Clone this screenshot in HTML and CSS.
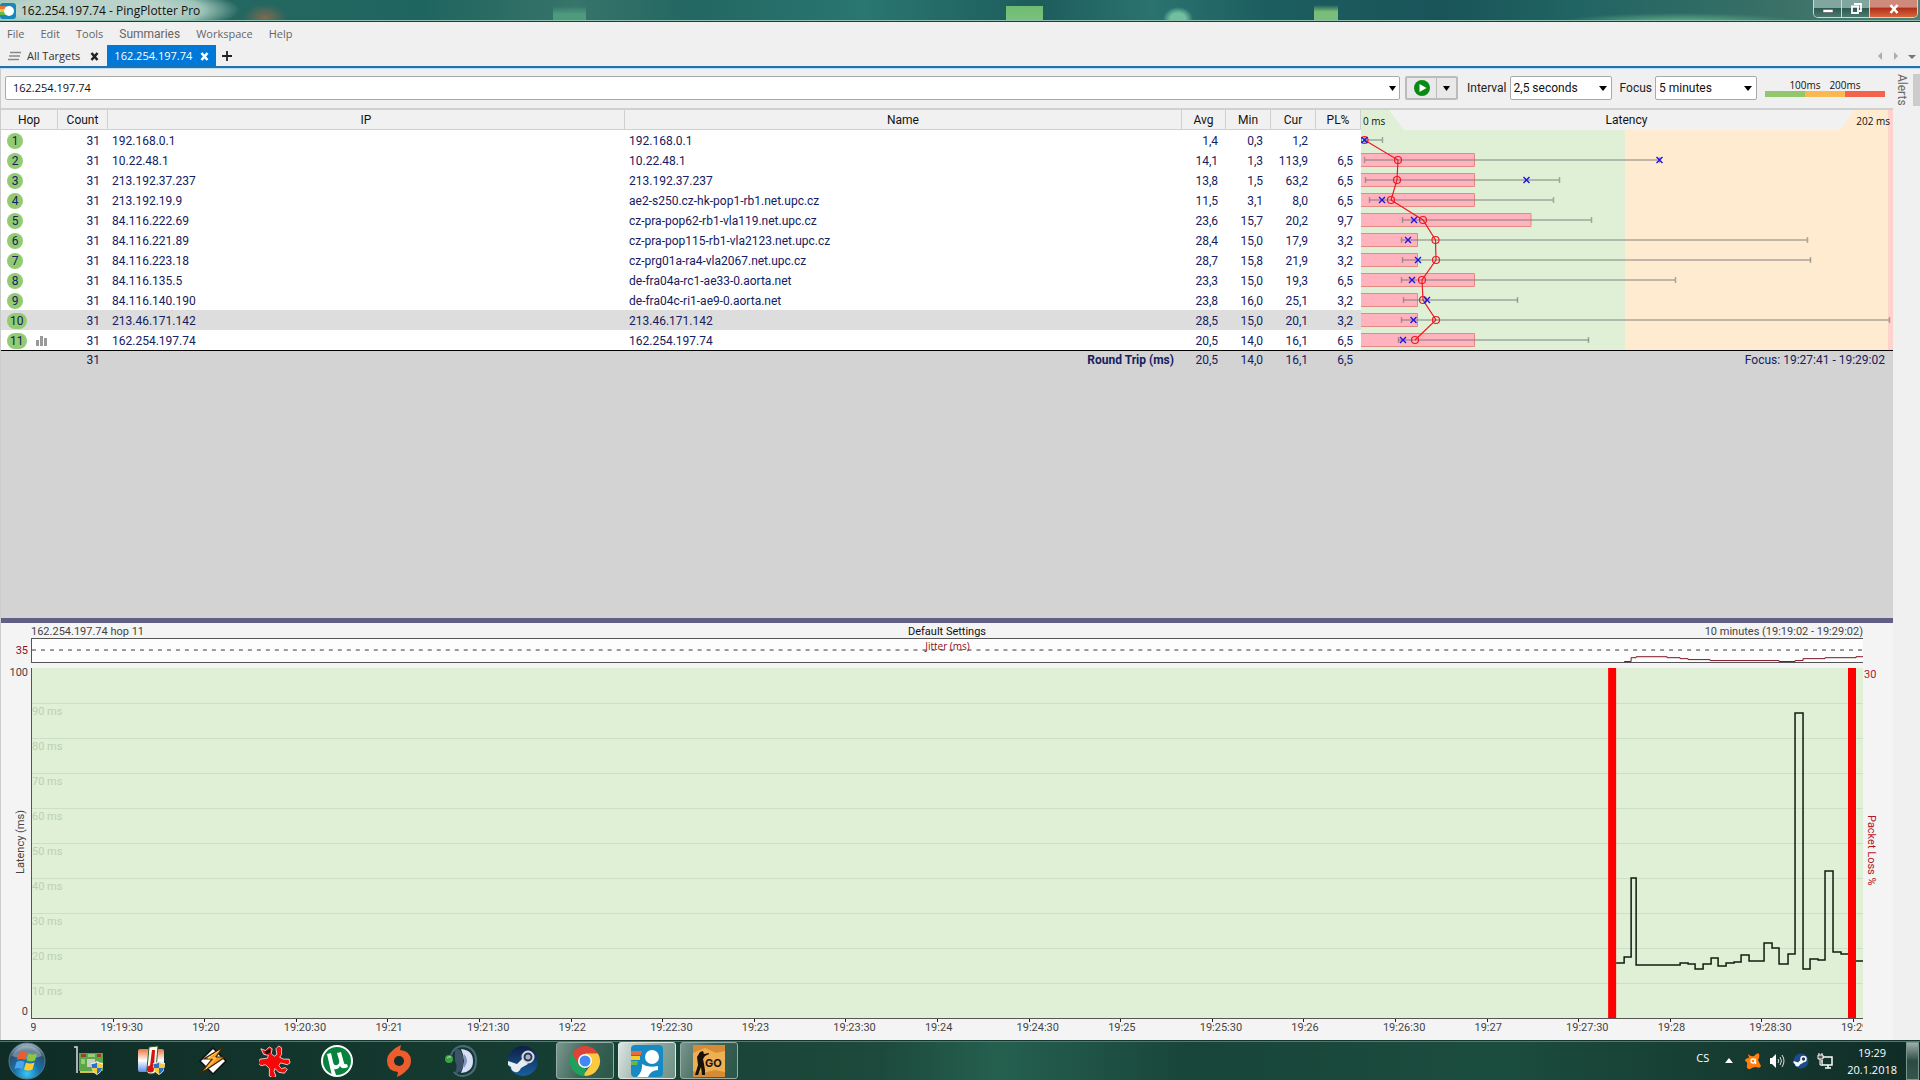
FILE: index.html
```html
<!DOCTYPE html>
<html lang="en">
<head>
<meta charset="utf-8">
<title>162.254.197.74 - PingPlotter Pro</title>
<link rel="stylesheet" href="styles.css">
</head>
<body>
<header class="titlebar">
  <svg class="app-icon" viewBox="0 0 16 16"><rect width="16" height="16" rx="3" fill="#1687b8"/><path d="M0 3h6v3H0z" fill="#e8743b"/><path d="M0 6h5v3H0z" fill="#f3c62b"/><path d="M0 9h5v3H0z" fill="#6cb64e"/><circle cx="9" cy="8" r="5" fill="#fff"/></svg>
  <h1 class="title">162.254.197.74 - PingPlotter Pro</h1>
  <div class="window-buttons">
    <button class="win-btn" aria-label="Minimize"><svg viewBox="0 0 12 12"><path d="M1 6.500h10v3H1z" fill="#fff" stroke="#555" stroke-width=".6"/></svg></button>
    <button class="win-btn" aria-label="Restore"><svg viewBox="0 0 12 12"><path d="M4 1h7v7H9M2 3.500h6v6.500H2z" fill="none" stroke="#fff" stroke-width="1.800"/></svg></button>
    <button class="win-btn win-close" aria-label="Close"><svg viewBox="0 0 12 12"><path d="M2.500 2l7 8M9.500 2l-7 8" stroke="#fff" stroke-width="2.600"/></svg></button>
  </div>
</header>

<nav class="menu">
  <a href="#">File</a><a href="#">Edit</a><a href="#">Tools</a><a href="#" class="wide">Summaries</a><a href="#">Workspace</a><a href="#">Help</a>
</nav>

<div class="tabs">
  <button class="tab"><svg class="lines" viewBox="0 0 13 10"><path d="M2 1.500h11M1 5h11M0 8.500h11" stroke="#888" stroke-width="1.500"/></svg><span>All Targets</span><svg class="x" viewBox="0 0 9 9"><path d="M1.500 1l6 7M7.500 1l-6 7" stroke="#222" stroke-width="2.600"/></svg></button>
  <button class="tab active"><span>162.254.197.74</span><svg class="x" viewBox="0 0 9 9"><path d="M1.500 1l6 7M7.500 1l-6 7" stroke="#fff" stroke-width="2.600"/></svg></button>
  <button class="tab add" aria-label="New tab"><svg viewBox="0 0 10 10"><path d="M5 0v10M0 5h10" stroke="#222" stroke-width="1.800"/></svg></button>
  <div class="tab-nav">
    <button aria-label="Scroll left"><svg viewBox="0 0 8 8"><path d="M6 0v8L2 4z" fill="#aaa"/></svg></button>
    <button aria-label="Scroll right"><svg viewBox="0 0 8 8"><path d="M2 0v8l4-4z" fill="#aaa"/></svg></button>
    <button aria-label="Tab list"><svg viewBox="0 0 8 8"><path d="M0 3h8L4 7z" fill="#777"/></svg></button>
  </div>
</div>

<div class="workarea">
<main class="main">
  <form class="toolbar">
    <div class="address"><input type="text" aria-label="Target" value="162.254.197.74"><button type="button" aria-label="Recent targets"><svg viewBox="0 0 7 5"><path d="M0 0h7L3.500 5z"/></svg></button></div>
    <div class="play">
      <button type="button" aria-label="Start trace"><svg class="go" viewBox="0 0 16 16"><circle cx="8" cy="8" r="8" fill="#0a8a12"/><path d="M5.500 4v8l7-4z" fill="#fff"/></svg></button>
      <button type="button" class="more" aria-label="Trace options"><svg viewBox="0 0 7 5"><path d="M0 0h7L3.500 5z"/></svg></button>
    </div>
    <label for="interval">Interval</label>
    <div class="select"><select id="interval"><option>2,5 seconds</option></select></div>
    <label for="focus">Focus</label>
    <div class="select"><select id="focus"><option>5 minutes</option></select></div>
    <div class="legend"><div class="legend-text"><span>100ms</span><span>200ms</span></div><div class="legend-bar"></div></div>
  </form>

  <table class="hops">
    <colgroup><col class="c-hop"><col class="c-count"><col class="c-ip"><col><col class="c-avg"><col class="c-min"><col class="c-min"><col class="c-pl"><col class="c-lat"></colgroup>
    <thead>
      <tr><th>Hop</th><th>Count</th><th>IP</th><th>Name</th><th>Avg</th><th>Min</th><th>Cur</th><th>PL%</th><th class="lat-head"><div class="lat-scale"><span>0 ms</span><strong>Latency</strong><span>202 ms</span></div></th></tr>
    </thead>
    <tbody>
      <tr><td><b>1</b></td><td>31</td><td>192.168.0.1</td><td>192.168.0.1</td><td>1,4</td><td>0,3</td><td>1,2</td><td></td>
        <td class="lat" rowspan="11">
          <svg class="lat-graph" viewBox="0 0 532 220" preserveAspectRatio="none">
            <g fill="#ffb3bf" stroke="#e58a80">
              <path d="M-1 23.500h114.500v13H-1zM-1 43.500h114.500v13H-1zM-1 63.500h114.500v13H-1zM-1 83.500h171v13H-1zM-1 103.500h57.500v13H-1zM-1 123.500h57.500v13H-1zM-1 143.500h114.500v13H-1zM-1 163.500h57.500v13H-1zM-1 183.500h57.500v13H-1zM-1 203.500h114.500v13H-1z"/>
            </g>
            <g fill="none" stroke="#777" stroke-opacity=".6" stroke-width="1.500">
              <path d="M4 10H21M4 30H298M4 50H198M8 70H192M41 90H230M40 110H446M41 130H450M40 150H314M42 170H157M40 190H528M37 210H228"/>
              <path d="M3.500 7v6M21.500 7v6M3.500 27v6M298.500 27v6M4.500 47v6M198.500 47v6M8.500 67v6M192.500 67v6M41.500 87v6M230.500 87v6M40.500 107v6M446.500 107v6M41.500 127v6M449.500 127v6M40.500 147v6M314.500 147v6M42.500 167v6M156.500 167v6M40.500 187v6M528.500 187v6M37.500 207v6M227.500 207v6"/>
            </g>
            <g fill="none" stroke="#f01820" stroke-width="1.200">
              <path d="M3.500 10L37 30L36 50L30 70L62 90L74.500 110L75 130L61 150L62 170L75 190L54 210"/>
              <circle cx="3.500" cy="10" r="3.500"/><circle cx="37" cy="30" r="3.500"/><circle cx="36" cy="50" r="3.500"/><circle cx="30" cy="70" r="3.500"/><circle cx="62" cy="90" r="3.500"/><circle cx="74.500" cy="110" r="3.500"/><circle cx="75" cy="130" r="3.500"/><circle cx="61" cy="150" r="3.500"/><circle cx="62" cy="170" r="3.500"/><circle cx="75" cy="190" r="3.500"/><circle cx="54" cy="210" r="3.500"/>
            </g>
            <path fill="none" stroke="#1c14e6" stroke-width="1.400" d="M.5 7l6 6m0-6l-6 6M295.500 27l6 6m0-6l-6 6M162.500 47l6 6m0-6l-6 6M18 67l6 6m0-6l-6 6M50 87l6 6m0-6l-6 6M44 107l6 6m0-6l-6 6M54 127l6 6m0-6l-6 6M48 147l6 6m0-6l-6 6M63 167l6 6m0-6l-6 6M49.500 187l6 6m0-6l-6 6M39 207l6 6m0-6l-6 6"/>
          </svg>
        </td></tr>
      <tr><td><b>2</b></td><td>31</td><td>10.22.48.1</td><td>10.22.48.1</td><td>14,1</td><td>1,3</td><td>113,9</td><td>6,5</td></tr>
      <tr><td><b>3</b></td><td>31</td><td>213.192.37.237</td><td>213.192.37.237</td><td>13,8</td><td>1,5</td><td>63,2</td><td>6,5</td></tr>
      <tr><td><b>4</b></td><td>31</td><td>213.192.19.9</td><td>ae2-s250.cz-hk-pop1-rb1.net.upc.cz</td><td>11,5</td><td>3,1</td><td>8,0</td><td>6,5</td></tr>
      <tr><td><b>5</b></td><td>31</td><td>84.116.222.69</td><td>cz-pra-pop62-rb1-vla119.net.upc.cz</td><td>23,6</td><td>15,7</td><td>20,2</td><td>9,7</td></tr>
      <tr><td><b>6</b></td><td>31</td><td>84.116.221.89</td><td>cz-pra-pop115-rb1-vla2123.net.upc.cz</td><td>28,4</td><td>15,0</td><td>17,9</td><td>3,2</td></tr>
      <tr><td><b>7</b></td><td>31</td><td>84.116.223.18</td><td>cz-prg01a-ra4-vla2067.net.upc.cz</td><td>28,7</td><td>15,8</td><td>21,9</td><td>3,2</td></tr>
      <tr><td><b>8</b></td><td>31</td><td>84.116.135.5</td><td>de-fra04a-rc1-ae33-0.aorta.net</td><td>23,3</td><td>15,0</td><td>19,3</td><td>6,5</td></tr>
      <tr><td><b>9</b></td><td>31</td><td>84.116.140.190</td><td>de-fra04c-ri1-ae9-0.aorta.net</td><td>23,8</td><td>16,0</td><td>25,1</td><td>3,2</td></tr>
      <tr class="selected"><td><b>10</b></td><td>31</td><td>213.46.171.142</td><td>213.46.171.142</td><td>28,5</td><td>15,0</td><td>20,1</td><td>3,2</td></tr>
      <tr><td><b>11</b><svg class="bars" viewBox="0 0 11 10"><path d="M0 4h3v6H0zM4 0h3v10H4zM8 2h3v8H8z" fill="#999"/></svg></td><td>31</td><td>162.254.197.74</td><td>162.254.197.74</td><td>20,5</td><td>14,0</td><td>16,1</td><td>6,5</td></tr>
    </tbody>
    <tfoot>
      <tr><td></td><td>31</td><td></td><td class="round">Round Trip (ms)</td><td>20,5</td><td>14,0</td><td>16,1</td><td>6,5</td><td class="focus-range">Focus: 19:27:41 - 19:29:02</td></tr>
    </tfoot>
  </table>
  <div class="empty"></div>

  <section class="timeline">
    <div class="t-title"><span>162.254.197.74 hop 11</span><span class="t-name">Default Settings</span><span>10 minutes (19:19:02 - 19:29:02)</span></div>
    <div class="jitter-max">35</div>
    <div class="jitter">
      <svg viewBox="0 0 1832 24" preserveAspectRatio="none"><path d="M0 11.500H1832" stroke="#333" stroke-dasharray="4 5"/><path d="M1593 23.500H1600V19.500H1605V18.500H1636V19.500H1649V20.500H1657V21.500H1679V22.500H1748V23.500H1764V22.500H1772V20.500H1794V19.500H1825V18.500H1832" fill="none" stroke="#7a1020"/></svg>
      <span>Jitter (ms)</span>
    </div>
    <div class="y-axis"><span>100</span><span class="vertical flip">Latency (ms)</span><span>0</span></div>
    <div class="plot">
      <div class="grid"><span></span><span>90 ms</span><span>80 ms</span><span>70 ms</span><span>60 ms</span><span>50 ms</span><span>40 ms</span><span>30 ms</span><span>20 ms</span><span>10 ms</span></div>
      <svg viewBox="0 0 1832 350" preserveAspectRatio="none">
        <path d="M1577 0h8v350h-8zM1817 0h8v350h-8z" fill="#f00"/>
        <path fill="none" stroke="#101c10" stroke-width="1.500" d="M1585 295H1593V289H1600V210H1605V297H1649V295H1657V296H1664V301H1672V296H1680V290H1687V298H1695V295H1703V294H1710V287H1718V293H1733V275H1741V280H1748V296H1757V286H1764V45H1772V301H1779V291H1787V292H1794V203H1802V284H1810V286H1817M1825 293H1832"/>
      </svg>
    </div>
    <div class="loss-axis"><span>30</span><span class="vertical">Packet Loss %</span></div>
    <div class="x-axis"><div class="ticks"><span>19:19</span><span>19:19:30</span><span>19:20</span><span>19:20:30</span><span>19:21</span><span>19:21:30</span><span>19:22</span><span>19:22:30</span><span>19:23</span><span>19:23:30</span><span>19:24</span><span>19:24:30</span><span>19:25</span><span>19:25:30</span><span>19:26</span><span>19:26:30</span><span>19:27</span><span>19:27:30</span><span>19:28</span><span>19:28:30</span><span>19:29</span></div></div>
  </section>
</main>
<aside class="side"><button class="vertical">Alerts</button><div class="handle"></div></aside>
</div>

<footer class="taskbar">
  <button class="start" aria-label="Start"><svg viewBox="0 0 38 38"><defs><radialGradient id="orb" cx=".5" cy=".85" r=".85"><stop offset="0" stop-color="#39c6f5"/><stop offset=".4" stop-color="#1672ae"/><stop offset=".75" stop-color="#2f4f6c"/><stop offset="1" stop-color="#a9bec8"/></radialGradient></defs><circle cx="19" cy="19" r="18" fill="url(#orb)" stroke="#527c8c"/><path d="M4 14a16 16 0 0 1 30 0q-15 6-30 0z" fill="#fff" opacity=".3"/><path d="M11 11q4-2.500 8 0l-2 7q-4-2-8 0z" fill="#ef5b2b"/><path d="M20.500 11.500q4 2 8.500 0l-2 7q-4 2-8.500 0z" fill="#8bc63e"/><path d="M8.500 20q4-2.500 8 0l-2 7q-4-2-8 0z" fill="#4aa6ea"/><path d="M18 20.500q4 2 8.500 0l-2 7q-4 2-8.500 0z" fill="#ffcb2e"/></svg></button>
  <button class="task" aria-label="Hardware monitor"><svg viewBox="0 0 32 32"><path d="M1 2h3v26" fill="none" stroke="#ddd" stroke-width="1.500"/><path d="M6 8h24v18H6z" fill="#5da648"/><path d="M8 9h5v3H8zM24 9h4v3h-4z" fill="#a23c2c"/><path d="M14 14h8v8h-8z" fill="#c9cfc5"/><path d="M8 14h4v5H8zM15 9h7v3h-7z" fill="#94cc7a"/><path d="M7 26h17v2H7z" fill="#d6c157"/><path d="M18 18q3.500 0 6-2 2.500 2 6 2 0 9-6 12-6-3-6-12z" fill="#eee"/><path d="M24 17.500V23h-5q-.5-2-.4-4 3 0 5.400-1.500zM24 23h5q-1 4-5 6z" fill="#2d6fc8"/><path d="M24 17.500q2.500 1.500 5.400 1.500.1 2-.4 4h-5zM24 23v6q-4-2-5-6z" fill="#f5ce2e"/></svg></button>
  <button class="task" aria-label="Thermometer"><svg viewBox="0 0 32 32"><defs><linearGradient id="heat" x2="0" y2="1"><stop offset="0" stop-color="#f1723b"/><stop offset=".5" stop-color="#fff"/><stop offset="1" stop-color="#5a8ee8"/></linearGradient></defs><rect x="3" y="4" width="26" height="23" rx="2" fill="url(#heat)"/><path d="M14 2l9-1-2 24q0 4-5 4t-4-5z" fill="#f8fff0" stroke="#335c2d"/><path d="M17 5h3l-1 16h-4z" fill="#d61111"/><circle cx="15.500" cy="24" r="3.500" fill="#d61111"/><path d="M18 18q3.500 0 6-2 2.500 2 6 2 0 9-6 12-6-3-6-12z" fill="#eee"/><path d="M24 17.500V23h-5q-.5-2-.4-4 3 0 5.400-1.500zM24 23h5q-1 4-5 6z" fill="#2d6fc8"/><path d="M24 17.500q2.500 1.500 5.400 1.500.1 2-.4 4h-5zM24 23v6q-4-2-5-6z" fill="#f5ce2e"/></svg></button>
  <button class="task" aria-label="Winamp"><svg viewBox="0 0 32 32"><path d="M16 3l13 13-13 13L3 16z" fill="#fff" stroke="#111" stroke-width="1.500"/><path d="M26 2L7 14h8L3 29l25-17h-9z" fill="#f79a1e" stroke="#3b2607" stroke-width="1.200"/><path d="M22 6L11 13h8L9 24" fill="none" stroke="#ffd46b"/></svg></button>
  <button class="task" aria-label="IrfanView"><svg viewBox="0 0 34 32"><path d="M2 3l5 2 4-4 3 2-1 5 3 3 3-2-1-6 3-3 3 2v7l-2 3 4 2 6 0 1 4-3 2-7-2-2 3 3 3 4-1 2 2-3 4-6-1-4-4-1 3 2 5-3 2-4-2 0-8-4-4-5 1-3-3 2-4 8-1 1-3-5-1z" fill="#f40808" stroke="#fff" stroke-width=".8"/><path d="M6 6l6-3v4l-4 2z" fill="#111"/></svg></button>
  <button class="task" aria-label="uTorrent"><svg viewBox="0 0 32 32"><circle cx="16" cy="16" r="16" fill="#fff"/><circle cx="16" cy="16" r="14" fill="#07833e"/><path d="M6 9l4-1 2 9q1 4 4 3 3-1 2-5l-2-7 4-1 3 11q.5 2 3 1l1 3q-6 3-8-1-2 4-6 3l2 6-4 1z" fill="#fff"/></svg></button>
  <button class="task" aria-label="Origin"><svg viewBox="0 0 32 32"><path d="M18 0l-1 5q11 1 11 11 0 6-6 11-3 3-8 5l1-5Q4 26 4 16 4 10 9 6q4-4 9-6z" fill="#ec5c2c"/><circle cx="16" cy="16" r="5" fill="#122f29"/></svg></button>
  <button class="task" aria-label="TeamSpeak"><svg viewBox="0 0 32 32"><path d="M6 10Q9 1 19 1q12 2 12 15T18 31q-6 0-9-4" fill="none" stroke="#4a6a80" stroke-width="2"/><path d="M16 4q12 1 12 12T16 28q6-12 0-24z" fill="#d7e0f6"/><path d="M10 4q6-2 8 8l0 10q-2 6-8 6 3-7 0-12z" fill="#3e5269"/><path d="M19 9q6 6 0 14z" fill="#8596bb"/><circle cx="4" cy="14" r="4" fill="#3da044"/><path d="M2 13q2-2 4-1" stroke="#bfe8bb" fill="none"/></svg></button>
  <button class="task" aria-label="Steam"><svg viewBox="0 0 32 32"><defs><linearGradient id="st" x2="0" y2="1"><stop offset="0" stop-color="#101d45"/><stop offset="1" stop-color="#17609d"/></linearGradient></defs><circle cx="16" cy="16" r="15" fill="url(#st)"/><path d="M1 16l9 3 6-6 5 6-7 4q-2 5-6 4t-4-5l-3-2z" fill="#e8edf2"/><circle cx="21" cy="12" r="5.500" fill="#29375c" stroke="#d9dde3" stroke-width="2"/><circle cx="21" cy="12" r="2.500" fill="#a9b2c1"/></svg></button>
  <button class="task open" aria-label="Chrome"><svg viewBox="0 0 32 32"><path d="M16 16L3 8.500A15 15 0 0 1 29 8.500z" fill="#db4437"/><path d="M16 16L3 8.500A15 15 0 0 0 16 31z" fill="#1fa15d"/><path d="M16 8.500h13A15 15 0 0 1 16 31l-1-2 7.500-10z" fill="#fdca3f"/><path d="M3 8.500l6.500 11.200L16 8.500z" fill="#db4437"/><path d="M3 8.500l6.500 11.200q3 4.500 8 4L14.500 31A15 15 0 0 1 3 8.500z" fill="#1fa15d"/><circle cx="16" cy="16" r="7" fill="#fff"/><circle cx="16" cy="16" r="5.500" fill="#4387f4"/></svg></button>
  <button class="task open current" aria-label="PingPlotter"><svg viewBox="0 0 32 32"><rect width="32" height="32" rx="4" fill="#178ac4"/><path d="M0 6h11l-1 4H0z" fill="#e96a3a"/><path d="M0 11h9v4H0z" fill="#f5cd2a"/><path d="M0 16h7l-1 4H0z" fill="#67b84d"/><circle cx="21" cy="12" r="7" fill="#fff"/><path d="M11 19q6 4 16 2v4q-7 0-10 7H6q6-6 5-13z" fill="#fff"/></svg></button>
  <button class="task open" aria-label="Counter-Strike"><svg viewBox="0 0 32 32"><rect width="32" height="32" fill="#eeb052"/><path d="M0 0h32v6l-9 2L12 3 0 8zM0 26l10 2 12-3 10 2v5H0z" fill="#cd7c2b" opacity=".7"/><path d="M7 7l3-1 1 3 5-1v1l-4 2-2 3 1 5 1 6v5H9l-1-8-3 8H2l3-10-1-8z" fill="#17130c"/><text x="12" y="22" font-family="Inter, sans-serif" font-size="11" font-weight="700" fill="#17130c">GO</text></svg></button>
  <div class="tray">
    <span class="lang">CS</span>
    <svg class="up" viewBox="0 0 8 5"><path d="M4 0l4 5H0z" fill="#fff"/></svg>
    <svg viewBox="0 0 16 16"><path d="M3 1q3 3 6 2 4-4 5-2 1 3-1 6l3 6q-1 3-5 1-3 0-6 2-4 0-3-4 1-3-2-4 0-3 4-3z" fill="#ff7e0d"/><circle cx="8" cy="8" r="2" fill="none" stroke="#fff" stroke-width="1.300"/><path d="M10.500 5.500V11" stroke="#fff" stroke-width="1.300"/></svg>
    <svg viewBox="0 0 16 16"><path d="M1 5h2l4-4v14l-4-4H1z" fill="#fff"/><path d="M9 6q1.500 2 0 4M11 4q3 4 0 8M13 2q4 6 0 12" stroke="#ddd" fill="none"/></svg>
    <svg viewBox="0 0 32 32"><circle cx="16" cy="16" r="15" fill="#1b4d8b"/><path d="M1 16l9 3 6-6 5 6-7 4q-2 5-6 4t-4-5l-3-2z" fill="#fff"/><circle cx="21" cy="12" r="5" fill="#29375c" stroke="#fff" stroke-width="3"/></svg>
    <svg viewBox="0 0 16 16"><path d="M6 4h9v8H5V7M8 15h6M11 12v3" fill="none" stroke="#fff" stroke-width="1.500"/><path d="M1 2h5v4H1zM2 0v2M5 0v2M3 6v6h2" fill="#555" stroke="#fff"/></svg>
    <time class="clock">19:29<br>20.1.2018</time>
    <button class="show-desktop" aria-label="Show desktop"></button>
  </div>
</footer>
</body>
</html>
```
FILE: styles.css
```css
* { box-sizing: border-box; }
body {
  margin: 0;
  min-height: 100vh;
  display: flex;
  flex-direction: column;
  background: #f0f0f0;
  color: #111;
  font: 12px/16px Roboto, "Open Sans", sans-serif;
}
button { padding: 0; border: 0; background: none; font: inherit; color: inherit; }
svg { display: block; flex: none; }

/* Title bar */
.titlebar {
  height: 22px;
  display: flex;
  align-items: flex-start;
  gap: 5px;
  border-bottom: 1px solid #17403c;
  box-shadow: inset 0 -1px #8fc0b0;
  background:
    radial-gradient(ellipse 150px 26px at 90px 10px, #b9d3cb 50%, #9dc4b8 75%, transparent),
    radial-gradient(ellipse 22px 14px at 265px 18px, #7d6a50, transparent),
    linear-gradient(transparent, #4d9a7d 50%) 553px 6px / 33px 16px no-repeat,
    linear-gradient(#6fba74, #7ac47c) 1006px 6px / 37px 16px no-repeat,
    radial-gradient(ellipse 15px 12px at 1178px 19px, #70c0a0 50%, transparent),
    linear-gradient(transparent, #79bd79 40%) 1314px 5px / 24px 17px no-repeat,
    radial-gradient(ellipse 120px 9px at 1680px 22px, #63b58b, transparent),
    linear-gradient(90deg, #2b6a62, #1f655f 22%, #37746a 30%, #236762 36%, #2a7670 45%, #1d5d5c 54%, #2b736f 60%, #1c5e60 66%, #195459 75%, #206463 82%, #386f66 92%, #4e8173);
}
.app-icon { width: 16px; height: 16px; margin-top: 3px; }
.title { flex: 1; margin: 2px 0 0; font: 12px/17px "Open Sans", sans-serif; color: #111; }
.window-buttons {
  display: flex;
  height: 18px;
  margin-right: 2px;
  border: 1px solid #c7dbd5;
  border-top: 0;
  border-radius: 0 0 5px 5px;
  overflow: hidden;
}
.win-btn {
  width: 28px;
  display: flex;
  align-items: center;
  justify-content: center;
  border-right: 1px solid #c7dbd5;
  background: linear-gradient(#81a69d 45%, #2c5b53 50%, #4d786e);
}
.win-btn svg { width: 12px; height: 12px; }
.win-close { width: 47px; border: 0; background: linear-gradient(#cf8a7b 40%, #b2311b 50%, #d8663c); }

/* Menu and tabs */
.menu {
  height: 23px;
  display: flex;
  gap: 16px;
  padding: 4px 7px 0;
  font: 11px/16px "Open Sans", sans-serif;
}
.menu a { color: #666; text-decoration: none; }
.menu .wide { font-family: Roboto, sans-serif; font-size: 12px; }
.tabs {
  height: 23px;
  display: flex;
  border-bottom: 2px solid #2272ab;
  box-shadow: 0 1px #bcdcf6;
  font: 11px/20px "Open Sans", sans-serif;
}
.tab { display: flex; align-items: center; gap: 10px; padding: 1px 8px 0; color: #333; }
.tab .lines { width: 13px; height: 10px; margin-right: -4px; }
.tab .x { width: 9px; height: 9px; }
.tab.active { gap: 8px; padding: 1px 7px 0; background: #0078d7; color: #fff; }
.tab.add { padding: 0 6px; }
.add svg { width: 10px; height: 10px; }
.tab-nav { margin-left: auto; display: flex; gap: 8px; padding-right: 4px; }
.tab-nav svg { width: 8px; height: 8px; }

.workarea { flex: 1; display: flex; border-left: 1px solid #ccc; }
.main { flex: 1; min-width: 0; display: flex; flex-direction: column; }
.side { width: 27px; display: flex; justify-content: space-between; align-items: flex-start; padding-top: 6px; }
.side button { color: #666; font-size: 12px; line-height: 18px; }
.handle { width: 7px; height: 32px; background: #ccc; }
.vertical { writing-mode: vertical-rl; }
.flip { transform: rotate(180deg); }

/* Toolbar */
.toolbar { height: 40px; display: flex; align-items: center; padding: 0 8px 0 4px; }
.toolbar label { margin: 0 3px 0 9px; color: #222; white-space: nowrap; }
.toolbar .select + label { margin-left: 8px; }
.address, .play, .select {
  height: 24px;
  display: flex;
  border: 1px solid #aaa;
  border-radius: 2px;
  background: #fff;
}
.address { flex: 1; }
.address input { flex: 1; min-width: 0; padding: 0 7px; border: 0; background: none; font: 11px/20px "Open Sans", sans-serif; color: #111; }
.address button { width: 13px; display: flex; justify-content: center; align-items: center; }
.address svg, .more svg { width: 7px; height: 5px; }
.play { width: 53px; margin-left: 5px; background: #e9e9e9; border-width: 2px; border-color: #bbb; }
.play button { flex: 1; display: flex; align-items: center; justify-content: center; }
.play .more { flex: none; width: 20px; border-left: 1px solid #bbb; }
.go { width: 16px; height: 16px; }
.select { width: 102px; align-items: center; }
.select::after { content: ""; margin-right: 4px; border: 4px solid transparent; border-top: 5px solid #000; border-bottom: 0; }
.select select { flex: 1; min-width: 0; appearance: none; border: 0; padding: 0 3px; background: none; font: inherit; color: #111; }
.legend { width: 120px; margin-left: 8px; }
.legend-text { display: flex; justify-content: center; font: 10px/11px "Open Sans", sans-serif; }
.legend-text span { width: 40px; text-align: center; }
.legend-bar { height: 6px; background: linear-gradient(90deg, #92c76c 40px, #fbb850 40px 80px, #f4624d 80px); }

/* Hop table */
.hops { width: 100%; table-layout: fixed; border-collapse: separate; border-spacing: 0; border-top: 2px solid #d0d0d0; background: #fff; color: #15205f; }
.c-hop { width: 57px; } .c-count { width: 50px; } .c-ip { width: 517px; }
.c-avg { width: 44px; } .c-min { width: 45px; } .c-pl { width: 45px; } .c-lat { width: 532px; }
.hops th { height: 20px; padding: 0; font-weight: 400; color: #111; background: #f1f1f1; border-right: 1px solid #d0d0d0; border-bottom: 1px solid #d0d0d0; }
.hops td { height: 20px; padding: 1px 8px 0 4px; line-height: 18px; text-align: right; white-space: nowrap; overflow: hidden; }
.hops td:nth-child(1) { padding: 0 6px; text-align: left; }
.hops td:nth-child(3), .hops td:nth-child(4) { text-align: left; }
.hops b { display: inline-block; min-width: 16px; height: 16px; padding: 0 3px; border-radius: 8px; background: #92cb70; font-weight: 400; line-height: 16px; text-align: center; vertical-align: middle; }
.bars { display: inline-block; width: 11px; height: 10px; margin-left: 9px; vertical-align: middle; }
.selected td { background: #ddd; }
.hops th.lat-head { border: 0; background: linear-gradient(90deg, #dff0d6 264px, #ffebcf 264px calc(100% - 5px), #ffd2cc calc(100% - 5px)); }
.lat-scale { height: 20px; display: flex; justify-content: space-between; align-items: center; padding: 0 3px 0 2px; position: relative; font: 10px/20px "Open Sans", sans-serif; }
.lat-scale::before { content: ""; position: absolute; inset: 0 39px 0 28px; background: #f1f1f1; clip-path: polygon(0 0, 100% 0, calc(100% - 13px) 100%, 15px 100%); }
.lat-scale span { width: 50px; text-align: left; position: relative; padding-top: 2px; }
.lat-scale span:last-child { text-align: right; }
.lat-scale strong { position: relative; font: 12px/20px Roboto, sans-serif; }
.hops td.lat { height: auto; padding: 0; background: linear-gradient(90deg, #dff0d6 264px, #ffebcf 264px calc(100% - 5px), #ffd2cc calc(100% - 5px)); }
.lat-graph { width: 100%; height: 220px; }
.hops tfoot td { background: #d3d3d3; border-top: 1px solid #000; padding-top: 0; padding-bottom: 1px; line-height: 17px; }
.hops tfoot .round { text-align: right; font-weight: 700; }
.empty { flex: 1; background: #d3d3d3; }

/* Timeline */
.timeline {
  display: grid;
  grid-template-columns: 30px 1fr 30px;
  grid-template-rows: 15px 25px 5px 351px 21px;
  border-top: 5px solid #625f86;
  background: #f4f4f4;
  color: #444;
  font-size: 11px;
  line-height: 14px;
}
.t-title { grid-area: 1 / 2; display: grid; grid-template-columns: 1fr auto 1fr; padding-top: 2px; line-height: 13px; }
.t-title span:last-child { text-align: right; }
.t-name { color: #111; }
.jitter-max { grid-area: 2 / 1; padding: 6px 3px 0 0; text-align: right; color: #8c1020; }
.jitter { grid-area: 2 / 2; position: relative; border: 1px solid #555; border-right: 0; background: #fdfdfd; text-align: center; color: #8c1020; font: 10px/14px "Open Sans", sans-serif; }
.jitter svg, .plot svg { position: absolute; inset: 0; width: 100%; height: 100%; }
.y-axis { grid-area: 4 / 1; display: flex; flex-direction: column; justify-content: space-between; align-items: flex-end; padding-right: 3px; margin-top: -2px; }
.plot { grid-area: 4 / 2; position: relative; border-left: 1px solid #555; border-bottom: 1px solid #555; background: #dff0d6; }
.grid { height: 100%; display: grid; grid-template-rows: repeat(10, 1fr); color: #bccfb5; }
.grid span { padding-top: 1px; }
.grid span + span { border-top: 1px solid #cddfc6; }
.loss-axis { grid-area: 4 / 3; display: flex; flex-direction: column; align-items: flex-start; padding-left: 1px; color: #b01828; }
.loss-axis .vertical { margin: auto 0; }
.x-axis { grid-area: 5 / 2; overflow: hidden; color: #444; }
.ticks { display: flex; margin-left: -22px; width: calc(100% + 22px); }
.ticks span { flex: none; width: calc((100% - 22px) / 20); padding-top: 2px; background: linear-gradient(#222, #222) 12px 0 / 1px 3px no-repeat; }

/* Taskbar */
.taskbar {
  height: 40px;
  display: flex;
  border-top: 1px solid #16372f;
  box-shadow: inset 0 1px #4e7b6d;
  background: linear-gradient(90deg, #0f2c26, #14392f 22%, #1d4a3c 46%, #25604f 52%, #18453a 62%, #1b4d3e 78%, #173f34 88%, #0f2b25);
}
.start { width: 58px; display: flex; align-items: center; justify-content: center; padding-right: 4px; }
.start svg { width: 38px; height: 38px; }
.task { width: 62px; display: flex; align-items: center; justify-content: center; }
.task svg { width: 32px; height: 32px; }
.task.open { width: 58px; margin: 1px 2px; border: 1px solid #94aea5; border-radius: 3px; background: linear-gradient(110deg, #7c968d, #3a6558 50%, #2a5547); }
.task.current { background: linear-gradient(110deg, #dde6e2, #93aca3 50%, #6f9186); border-color: #e0e8e5; }
.tray { margin-left: auto; display: flex; align-items: center; gap: 8px; color: #fff; font: 11px/17px "Open Sans", sans-serif; padding-right: 1px; }
.tray svg { width: 16px; height: 16px; }
.tray .up { width: 8px; height: 5px; margin: 0 4px 0 8px; }
.lang { padding-bottom: 6px; }
.clock { margin: 0 1px 0 6px; text-align: center; }
.show-desktop { width: 13px; height: 38px; border: 1px solid #79958b; background: linear-gradient(#9aafa8, #2d4a42 50%, #35564c); }
```
